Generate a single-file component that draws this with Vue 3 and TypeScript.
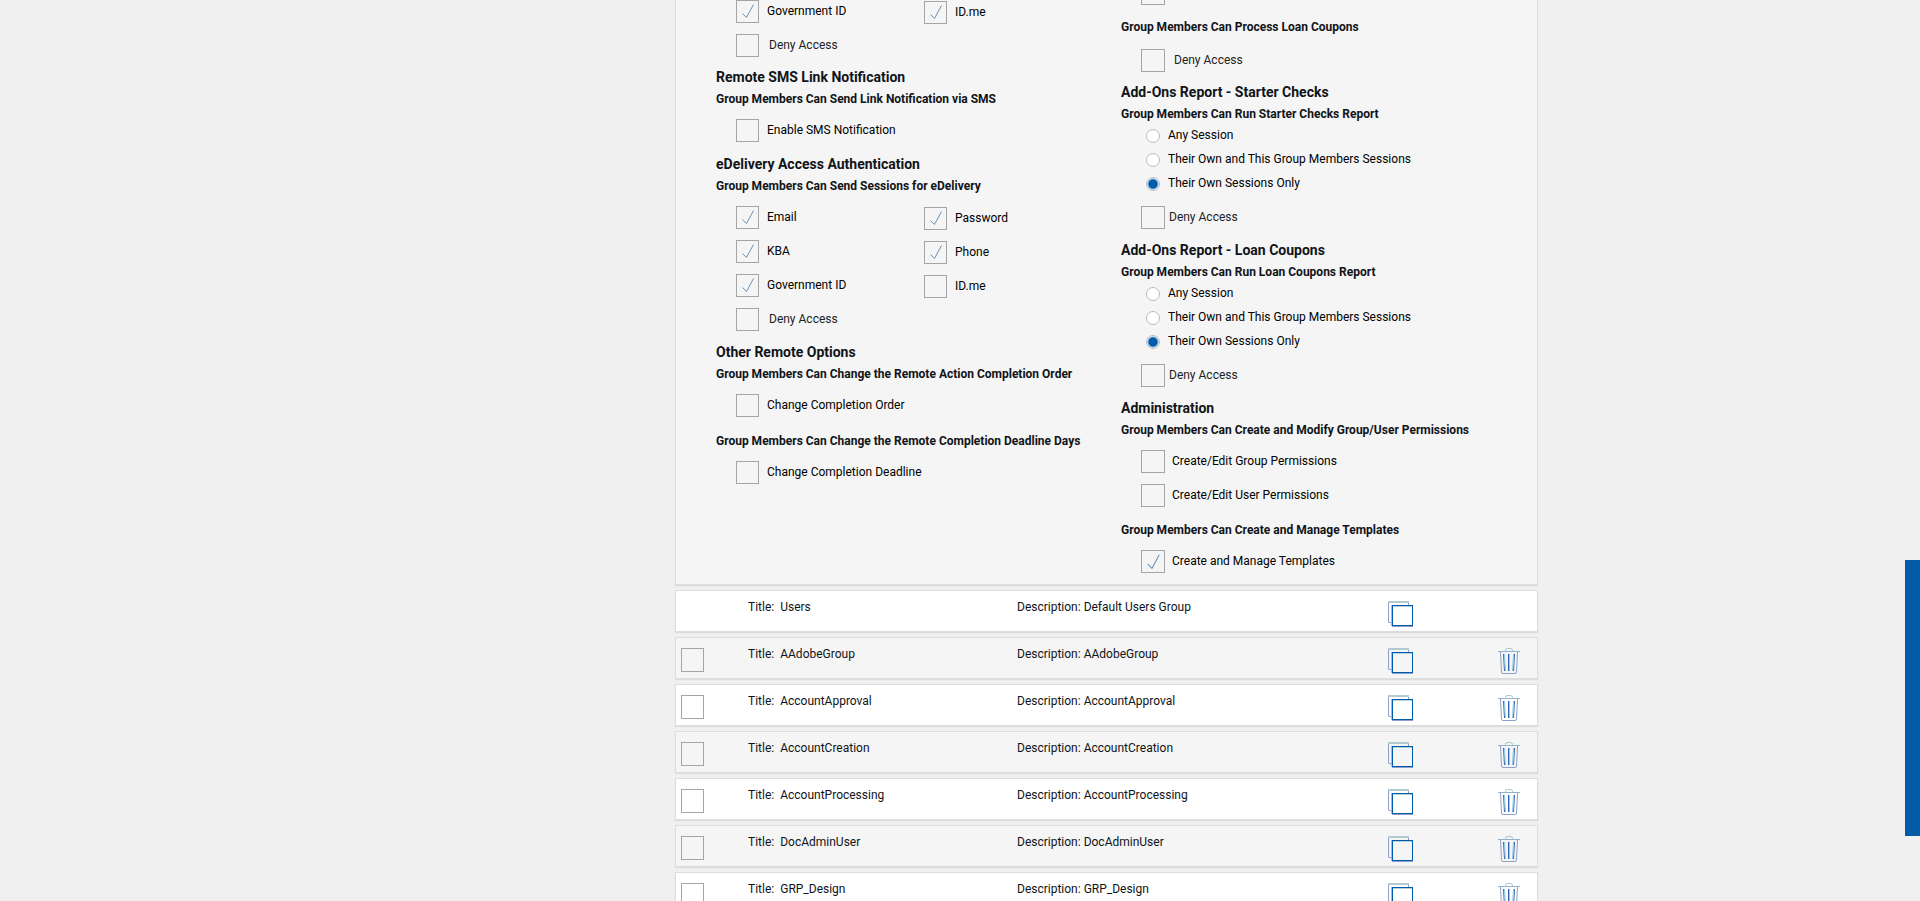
<script setup lang="ts">
import { reactive } from 'vue'

interface Option { id: string; label: string; checked: boolean }
interface Group { name: string; description: string; locked: boolean; selected: boolean }

const option = (id: string, label: string, checked = false): Option => ({ id, label, checked })

const remoteAccess = reactive<Option[]>([
  option('ra-gov', 'Government ID', true),
  option('ra-idme', 'ID.me', true),
])
const delivery = reactive<Option[]>([
  option('ed-email', 'Email', true),
  option('ed-password', 'Password', true),
  option('ed-kba', 'KBA', true),
  option('ed-phone', 'Phone', true),
  option('ed-gov', 'Government ID', true),
  option('ed-idme', 'ID.me'),
])
const single = reactive({
  remoteDeny: false,
  sms: false,
  deliveryDeny: false,
  order: false,
  deadline: false,
  couponDeny: false,
  starter: false,
  templates: true,
})
const admin = reactive<Option[]>([
  option('ad-group', 'Create/Edit Group Permissions'),
  option('ad-user', 'Create/Edit User Permissions'),
])

const scopes = ['Any Session', 'Their Own and This Group Members Sessions', 'Their Own Sessions Only']
const reports = reactive([
  { id: 'starter', title: 'Add-Ons Report - Starter Checks', question: 'Group Members Can Run Starter Checks Report', scope: 2, deny: false },
  { id: 'loan', title: 'Add-Ons Report - Loan Coupons', question: 'Group Members Can Run Loan Coupons Report', scope: 2, deny: false },
])

const groups = reactive<Group[]>([
  { name: 'Users', description: 'Default Users Group', locked: true, selected: false },
  ...['AAdobeGroup', 'AccountApproval', 'AccountCreation', 'AccountProcessing', 'DocAdminUser', 'GRP_Design'].map(
    (name) => ({ name, description: name, locked: false, selected: false }),
  ),
])
</script>

<template>
  <main class="page">
    <section class="panel">
      <div class="column">
        <div class="options pairs first">
          <label v-for="o in remoteAccess" :key="o.id" class="option">
            <span class="box"><input v-model="o.checked" type="checkbox" /><svg viewBox="0 0 23 23"><path d="M6.500 13.500L10.500 17.500L17.500 4.500" /></svg></span>
            <span>{{ o.label }}</span>
          </label>
          <label class="option deny">
            <span class="box"><input v-model="single.remoteDeny" type="checkbox" /></span>
            <span>Deny Access</span>
          </label>
        </div>

        <h2>Remote SMS Link Notification</h2>
        <h3>Group Members Can Send Link Notification via SMS</h3>
        <div class="options alone">
          <label class="option">
            <span class="box"><input v-model="single.sms" type="checkbox" /></span>
            <span>Enable SMS Notification</span>
          </label>
        </div>

        <h2>eDelivery Access Authentication</h2>
        <h3>Group Members Can Send Sessions for eDelivery</h3>
        <div class="options pairs">
          <label v-for="o in delivery" :key="o.id" class="option">
            <span class="box"><input v-model="o.checked" type="checkbox" /><svg viewBox="0 0 23 23"><path d="M6.500 13.500L10.500 17.500L17.500 4.500" /></svg></span>
            <span>{{ o.label }}</span>
          </label>
          <label class="option deny">
            <span class="box"><input v-model="single.deliveryDeny" type="checkbox" /></span>
            <span>Deny Access</span>
          </label>
        </div>

        <h2>Other Remote Options</h2>
        <h3>Group Members Can Change the Remote Action Completion Order</h3>
        <div class="options alone">
          <label class="option">
            <span class="box"><input v-model="single.order" type="checkbox" /></span>
            <span>Change Completion Order</span>
          </label>
        </div>
        <h3 class="next">Group Members Can Change the Remote Completion Deadline Days</h3>
        <div class="options alone">
          <label class="option">
            <span class="box"><input v-model="single.deadline" type="checkbox" /></span>
            <span>Change Completion Deadline</span>
          </label>
        </div>
      </div>

      <div class="column right">
        <div class="options scrolled">
          <span class="box"><input v-model="single.starter" type="checkbox" aria-label="Starter checks" /></span>
        </div>
        <h3>Group Members Can Process Loan Coupons</h3>
        <div class="options roomy">
          <label class="option deny">
            <span class="box"><input v-model="single.couponDeny" type="checkbox" /></span>
            <span>Deny Access</span>
          </label>
        </div>

        <template v-for="r in reports" :key="r.id">
          <h2>{{ r.title }}</h2>
          <h3>{{ r.question }}</h3>
          <div class="radios" role="radiogroup" :aria-label="r.question">
            <label v-for="(s, i) in scopes" :key="s" class="radio">
              <input v-model="r.scope" type="radio" :name="r.id" :value="i" />
              <span>{{ s }}</span>
            </label>
          </div>
          <div class="options">
            <label class="option tight">
              <span class="box"><input v-model="r.deny" type="checkbox" /></span>
              <span>Deny Access</span>
            </label>
          </div>
        </template>

        <h2>Administration</h2>
        <h3>Group Members Can Create and Modify Group/User Permissions</h3>
        <div class="options">
          <label v-for="o in admin" :key="o.id" class="option">
            <span class="box"><input v-model="o.checked" type="checkbox" /></span>
            <span>{{ o.label }}</span>
          </label>
        </div>
        <h3 class="next">Group Members Can Create and Manage Templates</h3>
        <div class="options">
          <label class="option">
            <span class="box"><input v-model="single.templates" type="checkbox" /><svg viewBox="0 0 23 23"><path d="M6.500 13.500L10.500 17.500L17.500 4.500" /></svg></span>
            <span>Create and Manage Templates</span>
          </label>
        </div>
      </div>
    </section>

    <ul class="groups">
      <li v-for="(g, i) in groups" :key="g.name" class="group" :class="{ shaded: i % 2 === 1 }">
        <span class="pick">
          <span v-if="!g.locked" class="box"><input v-model="g.selected" type="checkbox" :aria-label="g.name" /></span>
        </span>
        <span class="title"><span>Title:</span><span>{{ g.name }}</span></span>
        <span class="description">Description: {{ g.description }}</span>
        <button type="button" class="icon" aria-label="Copy group">
          <svg width="25" height="26" viewBox="0 0 25 26" fill="none">
            <path d="M0.500 21V1.500M20.500 1V4M0.500 21.500H3" stroke="#8c9fcf" />
            <path d="M0 1H21" stroke="#b3cbd0" stroke-width="2" />
            <path d="M3.500 4V25" stroke="#b9b3cf" />
            <rect x="4.500" y="4.500" width="20" height="20" stroke="#005ca9" />
            <path d="M5 5.500H24" stroke="#b3d3d8" />
            <path d="M4 25.500H25" stroke="#8c9fcf" />
          </svg>
        </button>
        <button v-if="!g.locked" type="button" class="icon" aria-label="Delete group">
          <svg width="22" height="26" viewBox="0 0 22 26" fill="none">
            <path d="M7.500 4V2.500Q7.500 0.500 9.500 0.500H12.500Q14.500 0.500 14.500 2.500V4" stroke="#a4c6cf" />
            <path d="M0 3.500H22" stroke="#93b3cc" />
            <path d="M2.500 4L3.500 24Q3.600 25.500 5 25.500H17Q18.400 25.500 18.500 24L19.500 4" stroke="#8ba0cf" />
            <path d="M5.500 6L6.500 23M10.500 6V23M16.500 6L15.500 23" stroke="#2f68ae" />
            <path d="M6.500 6L7.500 23M11.500 6V23M15.500 6L14.500 23" stroke="#8fc9e6" />
          </svg>
        </button>
      </li>
    </ul>

    <button type="button" class="side-tab" aria-label="Open side panel"></button>
  </main>
</template>

<style>
body {
  background: #f0f0f0;
}
</style>

<style scoped>
.page {
  box-sizing: border-box;
  height: 100vh;
  overflow: hidden;
  padding: 0 382px 0 675px;
  background: #f0f0f0;
  color: #101418;
  font: 12px/20px Roboto, "Liberation Sans", sans-serif;
}
.panel {
  display: grid;
  grid-template-columns: 405px 1fr;
  padding: 0 0 1px 40px;
  background: #f5f5f5;
  border: 1px solid #ddd;
  border-top: 0;
  box-shadow: 0 1px 1px #ddd;
}
h2,
h3 {
  margin: 0;
  line-height: 22px;
  font-weight: 700;
}
h2 {
  font-size: 14px;
}
h3 {
  font-size: 12px;
}
.next {
  margin-top: 2px;
}
.options {
  display: grid;
  row-gap: 11px;
  padding: 9px 0 10px 20px;
}
.alone {
  padding-bottom: 11px;
}
.pairs {
  grid-template-columns: 188px 1fr;
}
.pairs .option:nth-child(even) {
  margin: 1px 0 -1px;
}
.pairs .deny {
  grid-column: 1;
}
.first {
  padding-top: 0;
  padding-bottom: 9px;
}
.scrolled {
  margin-top: -18px;
  padding-top: 0;
  padding-bottom: 11px;
}
.roomy {
  padding-top: 11px;
  padding-bottom: 9px;
}
.option {
  display: flex;
  align-items: flex-start;
  gap: 8px;
  height: 23px;
  line-height: 22px;
  color: #000;
}
.right .option {
  gap: 7px;
}
.option.deny {
  gap: 10px;
  color: #222;
}
.right .option.deny {
  gap: 9px;
}
.right .option.tight {
  gap: 4px;
  color: #222;
}
.box {
  position: relative;
  flex: none;
  width: 23px;
  height: 23px;
}
.right .box {
  width: 24px;
}
.box input {
  appearance: none;
  display: block;
  box-sizing: border-box;
  width: 100%;
  height: 100%;
  margin: 0;
  border: 1px solid #a5a5a5;
}
.box svg {
  display: none;
  position: absolute;
  inset: 0;
  fill: none;
  stroke: #6593bd;
  pointer-events: none;
}
.box input:checked + svg {
  display: block;
}
.radio {
  display: flex;
  align-items: flex-start;
  gap: 8px;
  height: 24px;
  padding-left: 25px;
  color: #000;
}
.radio input {
  appearance: none;
  box-sizing: border-box;
  width: 14px;
  height: 14px;
  margin: 4px 0 0;
  border: 1px solid #bbb;
  border-radius: 50%;
  background: #fff;
}
.radio input:checked {
  background: radial-gradient(circle, #005ca9 4px, #fff 6px);
}
.groups {
  display: grid;
  gap: 5px;
  margin: 5px 0 0;
  padding: 0;
  list-style: none;
}
.group {
  display: grid;
  grid-template-columns: 72px 269px 1fr 110px 39px;
  box-sizing: border-box;
  height: 42px;
  padding-top: 6px;
  background: #fff;
  border: 1px solid #ddd;
  box-shadow: 0 1px 1px #ddd;
}
.shaded {
  background: #f5f5f5;
}
.pick {
  display: block;
  padding: 4px 0 0 5px;
}
.pick .box {
  display: block;
  height: 24px;
}
.title {
  display: flex;
  gap: 6px;
}
.icon {
  display: block;
  justify-self: start;
  align-self: start;
  margin: 0;
  padding: 4px 0 0;
  border: 0;
  background: none;
  line-height: 0;
}
.side-tab {
  position: fixed;
  right: 0;
  bottom: 65px;
  width: 15px;
  height: 276px;
  padding: 0;
  border: 0;
  background: #005ca6;
}
</style>
